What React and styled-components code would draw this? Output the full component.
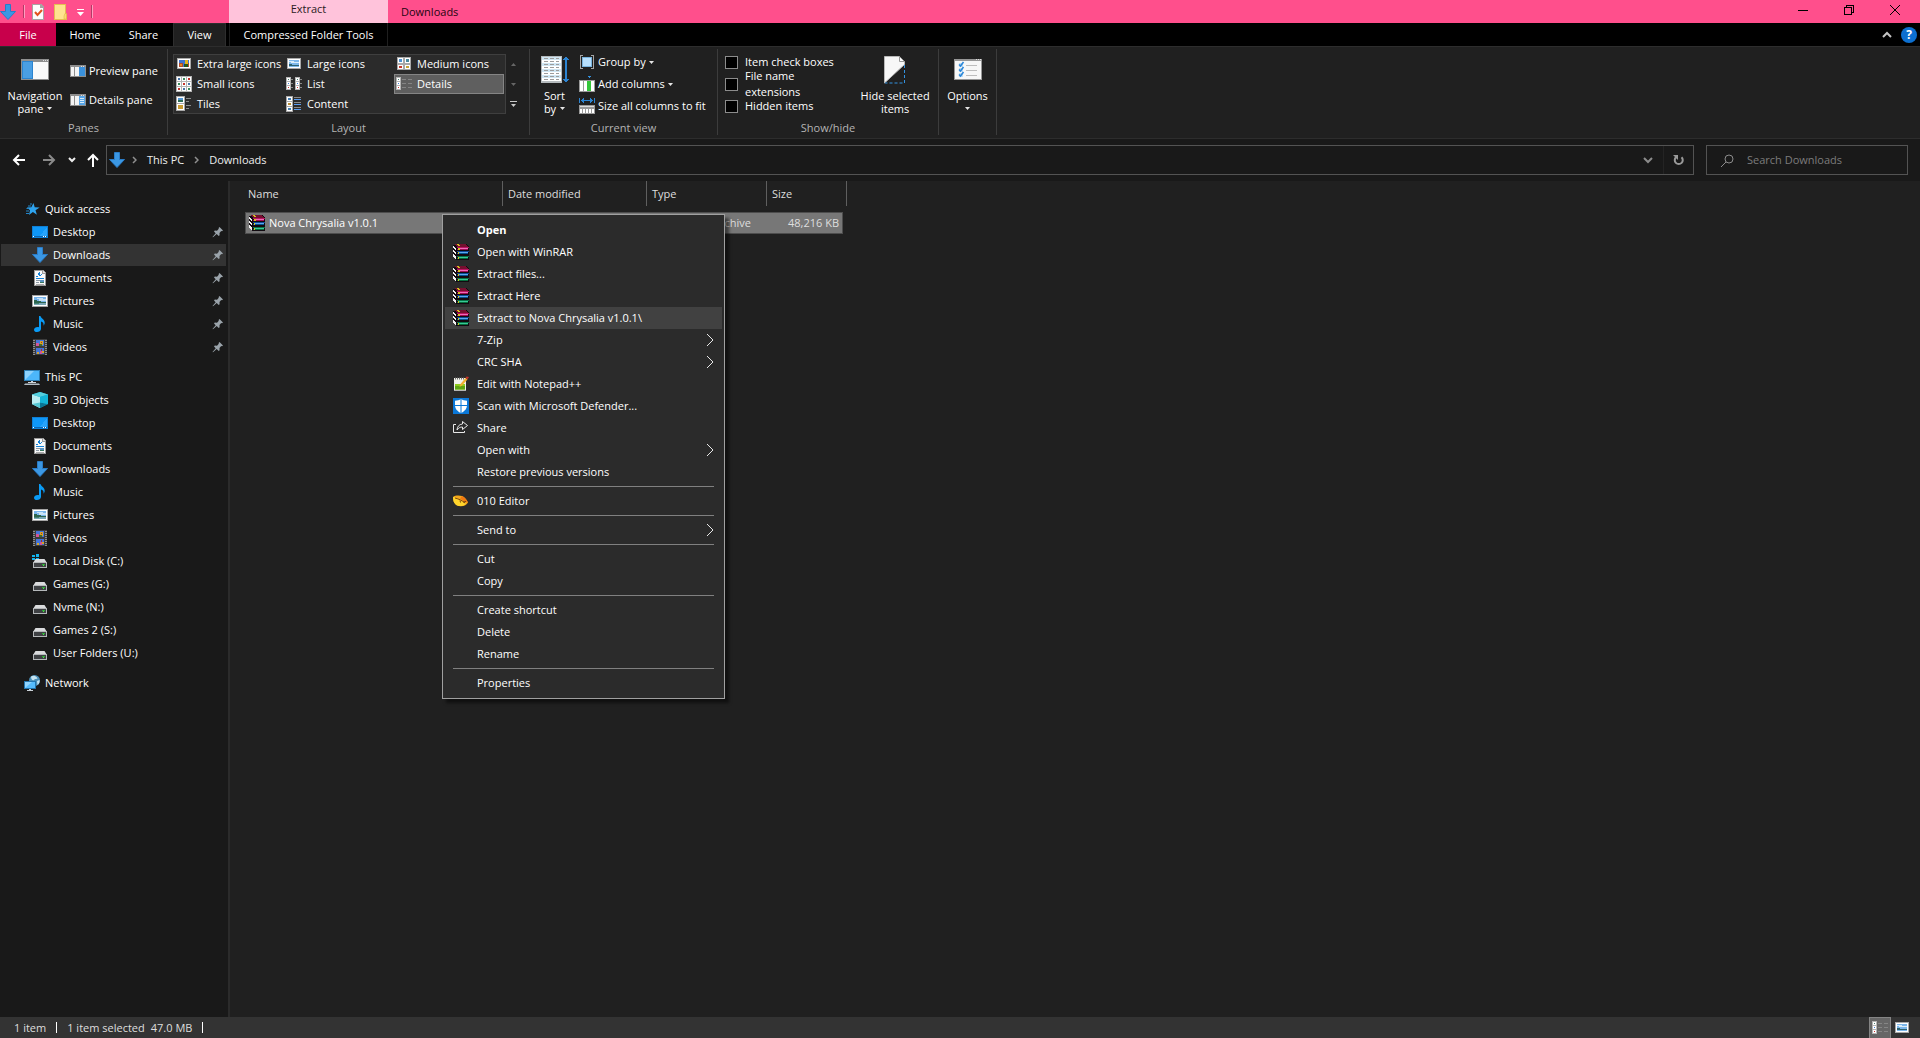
//Explorer window, details view with the file context menu opened
import React, { useState } from 'react';
import styled, { createGlobalStyle } from 'styled-components';

const GlobalStyle = createGlobalStyle`
    * {
        box-sizing: border-box;
    }
    body {
        margin: 0;
        background: #202020;
        color: #fff;
        font-family: "Open Sans", "Noto Sans", sans-serif;
        font-size: 11px;
        line-height: 16px;
    }
    button, input {
        font: inherit;
        color: inherit;
        margin: 0;
        padding: 0;
        border: none;
        background: none;
    }
    a {
        color: inherit;
        text-decoration: none;
    }
    svg {
        display: block;
        flex: none;
    }
    ul {
        list-style: none;
        margin: 0;
        padding: 0;
    }
`

/* ---------- icons ---------- */

const Svg = ({ w = 16, h = 16, crisp, children }) => (
    <svg width={w} height={h} viewBox={`0 0 ${w} ${h}`} fill="none" aria-hidden="true" shapeRendering={crisp ? 'crispEdges' : 'auto'}>
        {children}
    </svg>
);

const DownloadIcon = () => (
    <Svg>
        <path d="M5.5 .5h5v7h5L8 15.5.5 7.500h5z" fill="#3b97e3" stroke="#2a7cc7" />
    </Svg>
);

const DesktopIcon = () => (
    <Svg crisp>
        <rect y="2" width="16" height="12" fill="#0f7fd4" />
        <rect x="1" y="3" width="14" height="9" fill="#0f97f7" />
        <path d="M8 12l7-9v9z" fill="#28a4fb" />
        <path d="M1 12h14v1H1z" fill="#0a66b4" />
        <path d="M1 12h1v1H1zM11 12h1v1h-1zM13 12h1v1h-1z" fill="#fff" />
    </Svg>
);

const DocumentIcon = () => (
    <Svg crisp>
        <path d="M2 0h9l3 3v13H2z" fill="#9a9a9a" />
        <path d="M3 1h7v3h3v11H3z" fill="#fafafa" />
        <path d="M11 1l2 2h-2z" fill="#ddd" />
        <path d="M5 5h1V3h1V2h1v3h1v1M9 4h1v1H9zM4 6h2v1H4zM4 8h8v1H4z" fill="#1683d8" />
        <path d="M4 10h4v1H4zM4 12h3v1H4z" fill="#8d9aa5" />
        <path d="M8 10h4v2H8z" fill="#5a94c2" />
        <path d="M8 12h4v1H8z" fill="#39775f" />
        <path d="M4 14h8" stroke="#aaa" />
    </Svg>
);

const PictureIcon = () => (
    <Svg crisp>
        <rect y="2" width="16" height="12" fill="#a5a5a5" />
        <rect x="1" y="3" width="14" height="10" fill="#fff" />
        <rect x="2" y="4" width="12" height="8" fill="#79b5ec" />
        <path d="M5 5h6v1h3v2H7V6H5z" fill="#c8e2f7" />
        <path d="M2 7h3v1h4v1h5v1H2z" fill="#2d6650" />
        <path d="M2 10h12v2H2z" fill="#7aa7b5" />
        <path d="M2 10h5v1H2z" fill="#44806f" />
    </Svg>
);

const MusicIcon = () => (
    <Svg>
        <path d="M7 0h1.500c.2 2.300 4.500 3.500 4.200 7 0 1-.6 2-1.200 2.700.5-2.500-.8-3.700-2.500-4.200V13c-.2 1.800-2 3-4 3C3.300 16 2 15.200 2 13.700c0-1.800 2.500-3.200 5-2.500z" fill="#0a9bf5" />
    </Svg>
);

const VideoIcon = () => (
    <Svg crisp>
        <rect x="1" width="14" height="16" fill="#3c3c3c" />
        <path d="M2 1v15M14 1v15" stroke="#8b8b8b" strokeWidth="2" strokeDasharray="1 1" />
        <rect x="4" y="1" width="8" height="6" fill="#4474d8" />
        <rect x="4" y="9" width="8" height="6" fill="#4474d8" />
        <path d="M4 4h3v3H4zM8 12h2v3H8z" fill="#d2559a" />
        <path d="M8 2h3v4H8zM5 13h2v2H5zM10 12h2v2h-2z" fill="#d8a425" />
        <path d="M7 5h3v2H7z" fill="#436b27" />
        <path d="M9 3h1v1H9zM9 10h1v2H9z" fill="#b33020" />
    </Svg>
);

const StarIcon = () => (
    <Svg>
        <path d="M9.500 2l1.200 4.300 5 .1-4.200 2.800 1.400 4.500-4-2.600-3.900 3 1-4.800-3.200-2.700 4.500-.3z" fill="#2ea3ee" />
        <path d="M6 3h2M4 5h3M2.500 7.500H5M2 10h3M2 12.500h3" stroke="#2384c6" />
    </Svg>
);

const ComputerIcon = () => (
    <Svg>
        <rect x=".5" y="1.500" width="15" height="10" fill="#4cb7fb" stroke="#2d7eb4" />
        <path d="M1 11V2h9z" fill="#8dd2fd" />
        <path d="M7 12h2v1H7zM4 13h8v1H4z" fill="#cfd5da" />
        <path d="M1 14.500h14l1 1.500H0z" fill="#b1bbc4" />
    </Svg>
);

const CubeIcon = () => (
    <Svg>
        <path d="M8 0l8 2.500V12l-8 4-8-4V2.500z" fill="#1aa9cb" />
        <path d="M0 2.500L8 5v11l-8-4z" fill="#b9eef3" />
        <path d="M8 0l8 2.500L8 5 0 2.500z" fill="#54cfdd" />
        <path d="M0 12l8-1.500V16z" fill="#54c6d2" />
        <path d="M8 10.500l8 1.500-8 4z" fill="#0b7594" />
        <path d="M8 5l8-2.500V12l-8-1.500z" fill="#14b4d6" />
    </Svg>
);

const DriveIcon = ({ system }) => (
    <Svg>
        {system && <path d="M0 2h3v2H0zM4 1h3v3H4zM0 5h3v2H0zM4 5h3v3H4z" fill="#12b5ee" />}
        <path d="M3.500 6h9L15 10H1z" fill="#dadbdd" />
        <rect x="1.500" y="9.500" width="13" height="5" fill="#3f4144" stroke="#b5b8ba" />
        <rect x="11" y="11" width="1" height="2" fill="#45ea45" />
        <rect x="10" y="11" width="3" height="1" fill="#2eab35" />
    </Svg>
);

const NetworkIcon = () => (
    <Svg>
        <circle cx="10.500" cy="5.500" r="5.500" fill="#4b8fb8" />
        <path d="M7 1.500c3-2 6 0 6.500 2-1.500 1-2.500-.5-3.500 1.500-1.500 1-3-1-3-3.500zM13 6l2.500-1c.5 2-.5 4-2 5z" fill="#c4e3f0" />
        <rect x=".5" y="6.500" width="11" height="7" fill="#55bbfc" stroke="#2274ad" />
        <path d="M1 13V7h7z" fill="#91d4fd" />
        <path d="M5 14h2v1H5zM3 15h6v1H3z" fill="#cbd2d8" />
    </Svg>
);

const PinIcon = () => (
    <Svg w={12} h={12}>
        <path d="M7.500 1L11 4.500l-1 .8-.8-.2L7.500 7l.1 2.200-.9.8-2-2L1 11.200.5 11 3.700 7.200 2 5.500l.8-.9 2.200.1 1.800-1.900L6.600 2z" fill="#9aa3aa" />
    </Svg>
);

const BooksIcon = () => (
    <Svg crisp>
        <path d="M3 0h10l3 3v13H4L0 13V1z" fill="#120a10" />
        <path d="M2 0h11l2 3H4z" fill="#75102f" />
        <path d="M4 3h12v1H4z" fill="#b81562" />
        <path d="M5 4h10v1H5z" fill="#f06bb7" />
        <path d="M4 5h11v1H4z" fill="#a00c55" />
        <path d="M4 7h12v1H4z" fill="#0d4a98" />
        <path d="M5 8h10v1H5z" fill="#5ba9ea" />
        <path d="M4 9h11v1H4z" fill="#07508f" />
        <path d="M4 12h12v1H4z" fill="#087548" />
        <path d="M5 13h10v1H5z" fill="#39c897" />
        <path d="M4 14h11v1H4z" fill="#066c3c" />
        <path d="M0 2h1v1h1v1h1v2H2V5H1V4H0zM0 6h1v1h1v1h1v2H2V9H1V8H0zM0 10h1v1h1v1h1v3H2v-1H1v-1H0z" fill="#f2f2f2" />
        <path d="M4 0h2v1H4zM5 1h2v1H5zM5 4h2v2H5zM5 8h1v2H5zM5 13h1v2H5z" fill="#d6c31f" />
    </Svg>
);

const NotepadIcon = () => (
    <Svg>
        <path d="M1 2h12v12.500H1z" fill="#f1f2ea" />
        <path d="M2 8h10v5.500H2z" fill="#8fcc1d" />
        <path d="M2 10h10v3.500H2z" fill="#5ea512" />
        <path d="M2 2.500h10" stroke="#6f6f6f" strokeWidth="2" strokeDasharray="1 1" />
        <path d="M6.500 11l1-3 5-6 2 1.500-5.500 6z" fill="#f0b030" />
        <path d="M12.500 2l1-1.500L16 1l-1.500 2.500z" fill="#c2342a" />
        <path d="M1 14.500h12" stroke="#b5b5b5" />
    </Svg>
);

const DefenderIcon = () => (
    <Svg>
        <rect width="16" height="16" fill="#0b78d8" />
        <path d="M8 1c1.700 1.200 3.500 1.700 6 1.700V7c0 4-2.700 6.500-6 8-3.300-1.500-6-4-6-8V2.700C4.500 2.700 6.300 2.200 8 1z" fill="#fff" />
        <path d="M7.500 1h1v14h-1zM2 7h12v1H2z" fill="#0b78d8" />
    </Svg>
);

const ShareIcon = () => (
    <Svg>
        <path d="M3 4.500H.5v8h11V11" stroke="#e8e8e8" />
        <path d="M9.500 1.500l5 4-5 4v-2.500c-2.500 0-4 .8-5.500 3 .3-3.500 2-5.700 5.500-6z" stroke="#e8e8e8" />
    </Svg>
);

const EditorIcon = () => (
    <Svg>
        <path d="M0 4c2-1.700 6-1.800 9-1 2.500 1 4.500 3.500 6 6.500-1.500 2.500-4 4-8 3.700C2.500 12.500 0 9 0 4z" fill="#f5a81b" />
        <path d="M0 4c4 .5 9 3 12 5.500 1 1 1 2-1.500 3-3 1-6 .7-8-1C.7 9.500 0 7 0 4z" fill="#ffd52c" />
        <path d="M9 3c2.500 1 4.500 3.500 6 6.500-2-.5-5.500-2-8-4z" fill="#f07a12" />
        <path d="M2 5c4 1 7 2.500 10 5M7 7.500l.5 2M10 9l3-.5" stroke="#80420c" />
    </Svg>
);

const RibbonDoc = () => (
    <Svg w={12} crisp>
        <path d="M0 0h9l3 3v13H0z" fill="#a9a3a3" />
        <path d="M1 1h7v3h3v11H1z" fill="#fdfdfd" />
        <path d="M3 8l2.500 3L10 6" stroke="#e2541f" strokeWidth="2" shapeRendering="auto" />
    </Svg>
);

const FolderIcon = () => (
    <Svg w={13}>
        <path d="M0 0h12v9.500h1V16H0z" fill="#e5bd52" />
        <path d="M1 1h10v14H1z" fill="#ffe38f" />
        <path d="M11 9.500h1.500V15H10v-3z" fill="#fbd773" stroke="#dcae3d" strokeWidth=".5" />
    </Svg>
);

const PaneIcon = ({ kind }) => (
    <Svg crisp>
        <rect y="2" width="16" height="12" fill="#8e8e8e" />
        <path d="M11 3h1v1h-1zM13 3h1v1h-1z" fill="#ddd" />
        <path d="M1 4h3v9H1zM5 4h4v9H5z" fill="#f3f3f3" />
        <path d="M9 4h6v9H9z" fill={kind === 'details' ? '#58a6e8' : '#3a91dc'} />
        {kind === 'details' && <path d="M10 6.500h4M10 8.500h4M10 10.500h4" stroke="#d8ecfb" />}
    </Svg>
);

const NavigationIcon = () => (
    <Svg w={28} h={22} crisp>
        <rect width="28" height="21" fill="#8f8f8f" />
        <path d="M22 1h1v1h-1zM24 1h1v1h-1zM26 1h1v1h-1z" fill="#e0e0e0" />
        <rect x="1" y="3" width="26" height="17" fill="#fafafa" />
        <rect x="1" y="3" width="11" height="17" fill="#4a9fe4" />
        <path d="M1.500 2.500h10v17h-10z" stroke="#2c84cf" />
    </Svg>
);

const Thumb = ({ x, y, w, h, fill }) => (
    <>
        <rect x={x} y={y} width={w} height={h} fill="#a9a9a9" />
        <rect x={x + 1} y={y + 1} width={w - 2} height={h - 2} fill="#fff" />
        <rect x={x + 2} y={y + 2} width={w - 4} height={h - 4} fill={fill} />
    </>
);

const ExtraLargeIcon = () => (
    <Svg crisp>
        <Thumb x={1} y={2} w={14} h={11} fill="#3f73d0" />
        <path d="M3 7h4v4H3zM11 7h2v4h-2z" fill="#b04c2c" />
        <path d="M9 4h3v4H9z" fill="#e5b51e" />
        <path d="M8 8h4v3H8z" fill="#23571f" />
        <path d="M4 8h2v2H4z" fill="#e38a23" />
    </Svg>
);

const LargeIcon = () => (
    <Svg crisp>
        <Thumb x={1} y={2} w={14} h={11} fill="#7db7eb" />
        <path d="M3 5h5v1h5v1H5V6H3z" fill="#dbeefa" />
        <path d="M3 8h3v1h7v1H3z" fill="#2e6370" />
    </Svg>
);

const MediumIcon = () => (
    <Svg crisp>
        <Thumb x={1} y={1} w={7} h={7} fill="#4f93d0" />
        <Thumb x={8} y={1} w={7} h={7} fill="#4b8a9d" />
        <Thumb x={1} y={8} w={7} h={6} fill="#c93728" />
        <Thumb x={8} y={8} w={7} h={6} fill="#c8a436" />
    </Svg>
);

const SmallIcon = () => (
    <Svg crisp>
        <rect width="16" height="16" fill="#b5b5b5" />
        {[0, 1, 2].map((r) => [0, 1, 2].map((c) => (
            <g key={r + '-' + c}>
                <rect x={1 + c * 5} y={1 + r * 5} width="4" height="4" fill="#fff" />
                <rect x={2 + c * 5} y={2 + r * 5} width="2" height="2" fill={['#4673a8', '#3a8a5b', '#c4332b'][(r + c) % 3]} />
            </g>
        )))}
    </Svg>
);

const ListStrip = ({ x }) => (
    <>
        <rect x={x} y="1" width="5" height="13" fill="#b5b5b5" />
        {['#4d8272', '#3f7fdc', '#d22f2f'].map((c, i) => (
            <g key={c}>
                <rect x={x + 1} y={2 + i * 4} width="3" height="3" fill="#fff" />
                <rect x={x + 2} y={3 + i * 4} width="1" height="1" fill={c} />
            </g>
        ))}
    </>
);

const ListIcon = () => (
    <Svg crisp>
        <ListStrip x={0} />
        <ListStrip x={9} />
        <path d="M5 3.500h2M5 7.500h2M5 11.500h2M14 3.500h2M14 7.500h2M14 11.500h2" stroke="#8a8a8a" />
    </Svg>
);

const DetailsIcon = () => (
    <Svg crisp>
        <ListStrip x={0} />
        <path d="M6 3.500h4M6 7.500h4M6 11.500h4M12 3.500h4M12 7.500h4M12 11.500h4" stroke="#858585" />
    </Svg>
);

const TilesIcon = () => (
    <Svg crisp>
        <Thumb x={0} y={0} w={9} h={8} fill="#5597d3" />
        <Thumb x={0} y={7} w={9} h={8} fill="#c99b32" />
        <path d="M2 4h5v2H2z" fill="#2f6d56" />
        <path d="M10 2.500h5M10 5.500h3M10 9.500h5M10 12.500h3" stroke="#8a8a8a" />
    </Svg>
);

const ContentIcon = () => (
    <Svg crisp>
        <Thumb x={0} y={0} w={7} h={6} fill="#477fb3" />
        <Thumb x={0} y={5} w={7} h={6} fill="#b98d35" />
        <Thumb x={0} y={10} w={7} h={6} fill="#467fae" />
        <path d="M8 1.500h7M8 6.500h7M8 11.500h7" stroke="#8a8a8a" />
        <path d="M8 3.500h7M8 8.500h7M8 13.500h7" stroke="#5b9df0" />
    </Svg>
);

const SortIcon = () => (
    <Svg w={28} h={28} crisp>
        <rect width="21" height="27" fill="#b5babd" />
        {[0, 1, 2, 3, 4, 5, 6, 7].map((i) => (
            <g key={i}>
                <rect x="1" y={1 + i * 3} width="19" height="3" fill={i % 2 ? '#fff' : '#cfe6f3'} />
                <path d={`M3 ${2.5 + i * 3}h4M9 ${2.5 + i * 3}h4M15 ${2.5 + i * 3}h3`} stroke="#9c9c9c" />
            </g>
        ))}
        <path d="M25 2v23" stroke="#2c84d2" strokeWidth="2" />
        <path d="M22 4l3-4 3 4zM22 23l3 4 3-4z" fill="#2c84d2" />
    </Svg>
);

const GroupIcon = () => (
    <Svg crisp>
        <path d="M4 1.500H1.500v13H4M12 1.500h2.500v13H12" stroke="#a5a5a5" />
        <path d="M3.500 3.500h9v9h-9z" fill="#b8dffc" stroke="#78b2dd" />
    </Svg>
);

const AddColumnsIcon = () => (
    <Svg crisp>
        <path d="M8 0h4l-2 2z" fill="#3392e0" />
        <rect y="4" width="16" height="12" fill="#9a9a9a" />
        <path d="M1 5h3v10H1zM5 5h3v10H5zM12 5h3v10h-3z" fill="#fff" />
        <path d="M8 5h4v10H8z" fill="#34c63a" />
    </Svg>
);

const SizeColumnsIcon = () => (
    <Svg crisp>
        <path d="M.5 0v5M15.500 0v5M3 2.500h10" stroke="#2c84d2" />
        <path d="M2 2.500l3-2.500v5zM14 2.500L11 0v5z" fill="#2c84d2" />
        <rect y="7" width="16" height="9" fill="#9a9a9a" />
        <path d="M1 8h14v1H1z" fill="#dcdcdc" />
        <path d="M1 11h2v4H1zM4 11h2v4H4zM7 11h2v4H7zM10 11h2v4h-2zM13 11h2v4h-2z" fill="#fff" />
    </Svg>
);

const HideIcon = () => (
    <Svg w={22} h={28}>
        <path d="M.5 27V.5h15l5 5v3z" fill="#f7f7f7" stroke="#b9b9b9" />
        <path d="M15.500.5v5h5z" fill="#fff" stroke="#999" />
        <path d="M20.500 9v18H1" stroke="#3392e0" strokeDasharray="3 2" />
    </Svg>
);

const OptionsIcon = () => (
    <Svg w={28} h={22}>
        <rect width="28" height="21" fill="#979797" />
        <rect x="1" y="2" width="26" height="18" fill="#f7f7f7" />
        <path d="M22 .500h1M24 .500h1M26 .500h1" stroke="#e0e0e0" />
        {[0, 1, 2].map((i) => (
            <g key={i}>
                <rect x="5" y={4 + i * 5} width="4" height="4" fill="#c2dff5" />
                <path d={`M5 ${5.5 + i * 5}l1.500 1.500 3-4`} stroke="#2a86d8" strokeWidth="1.500" />
                <path d={`M12 ${6.5 + i * 5}h11`} stroke="#bdbdbd" />
            </g>
        ))}
    </Svg>
);

const Caret = ({ fill = '#e6e6e6' }) => (
    <Svg w={5} h={3}>
        <path d="M0 0h5L2.500 3z" fill={fill} />
    </Svg>
);

const ArrowIcon = ({ color = '#fff', d }) => (
    <Svg w={14} h={14}>
        <path d={d} stroke={color} strokeWidth="2" />
    </Svg>
);

const BreadChevron = () => (
    <Svg w={5} h={8}>
        <path d="M1 1l3 3-3 3" stroke="#8f8f8f" strokeWidth="1.500" />
    </Svg>
);

const MenuChevron = () => (
    <Svg w={8} h={14}>
        <path d="M1 1l6 6-6 6" stroke="#e8e8e8" />
    </Svg>
);

/* ---------- layout ---------- */

const Window = styled.div`
    display: flex;
    flex-direction: column;
    min-height: 100vh;
`

const TitleBar = styled.header`
    display: flex;
    height: 23px;
    background: #ff4f8c;
    color: #1d0510;
`

const QuickBar = styled.div`
    display: flex;
    align-items: center;
    gap: 10px;
    width: 229px;
    button {
        display: flex;
    }
`

const QuickDivider = styled.span`
    width: 2px;
    height: 13px;
    border-left: 1px solid #b43a66;
    border-right: 1px solid #ff9dbf;
    margin: 0 -3px;
`

const ContextTitle = styled.div`
    width: 159px;
    padding-top: 1px;
    background: #ffc3db;
    text-align: center;
    color: #2b1b22;
`

const WindowTitle = styled.h1`
    flex: 1;
    margin: 0;
    padding: 4px 0 0 13px;
    font-size: 11px;
    font-weight: 400;
`

const WindowControls = styled.div`
    display: flex;
    padding-right: 2px;
    button {
        display: flex;
        justify-content: center;
        padding-top: 5px;
        width: 46px;
    }
`

const TabRow = styled.nav`
    display: flex;
    height: 23px;
    background: #000;
`

const Tab = styled.button`
    width: ${props => props.$width}px;
    background: ${props => props.$file ? '#c8004b' : props.$active ? '#202020' : 'transparent'};
    border: solid #2e2e2e;
    border-width: ${props => props.$active ? '1px 1px 0' : '0'};
`

const ContextTab = styled(Tab)`
    margin-left: 3px;
    border: solid #1f1f1f;
    border-width: 0 1px;
`

const TabRowEnd = styled.div`
    display: flex;
    align-items: center;
    gap: 9px;
    margin-left: auto;
    padding-right: 3px;
`

const Help = styled.button`
    width: 16px;
    height: 16px;
    border-radius: 8px;
    background: #0c6fd0;
    font-size: 12px;
    font-weight: 700;
    line-height: 16px;
`

const Ribbon = styled.div`
    display: flex;
    height: 93px;
    padding-top: 2px;
    background: #202020;
    border: solid #2d2d2d;
    border-width: 1px 0;
`

const Group = styled.section`
    display: flex;
    flex-direction: column;
    width: ${props => props.$width}px;
    height: 86px;
    border-right: 1px solid #3c3c3c;
`

const GroupBody = styled.div`
    display: flex;
    flex: 1;
    padding-left: ${props => props.$left || 0}px;
`

const GroupLabel = styled.h2`
    margin: 0;
    font-size: 11px;
    font-weight: 400;
    line-height: 14px;
    text-align: center;
    color: #b4b4b4;
`

const BigButton = styled.button`
    display: flex;
    flex-direction: column;
    align-items: center;
    width: ${props => props.$width}px;
    padding-top: 7px;
    line-height: 13px;
`

const BigIcon = styled.span`
    display: flex;
    align-items: center;
    height: 28px;
    margin-bottom: 5px;
`

const Inline = styled.span`
    display: flex;
    align-items: center;
    gap: 4px;
    min-height: 13px;
`

const SmallStack = styled.div`
    display: flex;
    flex-direction: column;
    padding: ${props => props.$wide ? '7px 0 0 0' : '2px 0 0 0'};
    button {
        display: flex;
        align-items: center;
        gap: 3px;
        height: ${props => props.$wide ? 29 : 22}px;
    }
`

const CheckLabel = styled.label`
    display: flex;
    align-items: center;
    gap: 7px;
    height: 22px;
    input {
        appearance: none;
        width: 13px;
        height: 13px;
        background: #000;
        border: 1px solid #8c8c8c;
    }
    input:checked {
        background: #8c8c8c;
    }
`

const Gallery = styled.div`
    display: grid;
    grid-template-columns: repeat(3, 110px);
    grid-auto-rows: 20px;
    width: 333px;
    height: 60px;
    margin-top: 5px;
    padding-left: 1px;
    background: #2b2b2b;
    box-shadow: inset 0 0 0 1px #3f3f3f;
`

const GalleryItem = styled.button`
    display: flex;
    align-items: center;
    gap: 5px;
    padding-left: 2px;
    white-space: nowrap;
    background: ${props => props.$active ? '#5f5f5f' : 'transparent'};
    box-shadow: ${props => props.$active ? 'inset 0 0 0 1px #858585' : 'none'};
`

const GalleryScroll = styled.div`
    display: flex;
    flex-direction: column;
    margin-top: 5px;
    button {
        display: flex;
        align-items: center;
        justify-content: center;
        width: 14px;
        height: 20px;
    }
`

const NavBar = styled.div`
    display: flex;
    align-items: center;
    height: 42px;
    padding: 0 12px;
    background: #191919;
`

const NavButtons = styled.div`
    display: flex;
    align-items: center;
    width: 94px;
    button {
        display: flex;
    }
    button:nth-child(2) {
        margin-left: 16px;
    }
    button:nth-child(3) {
        margin-left: 12px;
    }
    button:nth-child(4) {
        margin-left: 10px;
    }
`

const AddressBar = styled.div`
    display: flex;
    align-items: center;
    flex: 1;
    height: 30px;
    padding-left: 2px;
    border: 1px solid #535353;
    button {
        display: flex;
        align-items: center;
        justify-content: center;
        width: 30px;
        height: 28px;
    }
    button + button {
        border-left: 1px solid #242424;
    }
`

const Crumbs = styled.div`
    display: flex;
    align-items: center;
    flex: 1;
    gap: 10px;
    padding-left: 7px;
    color: #eee;
`

const SearchBox = styled.label`
    display: flex;
    align-items: center;
    gap: 13px;
    width: 202px;
    height: 30px;
    margin-left: 12px;
    padding-left: 14px;
    border: 1px solid #535353;
    input {
        flex: 1;
        min-width: 0;
        outline: none;
    }
    input::placeholder {
        color: #7c7c7c;
        opacity: 1;
    }
`

const Body = styled.div`
    display: flex;
    flex: 1;
`

const Sidebar = styled.nav`
    width: 230px;
    padding: 16px 2px 0 1px;
    background: #191919;
    border-right: 2px solid #2b2b2b;
    ul + ul {
        margin-top: 8px;
    }
`

const SideLink = styled.a`
    display: flex;
    align-items: center;
    gap: 5px;
    height: 22px;
    margin: 1px 0;
    padding: 0 2px 0 ${props => props.$root ? 23 : 31}px;
    background: ${props => props.$active ? '#333' : 'transparent'};
    > svg:last-child:not(:first-child) {
        margin-left: auto;
    }
`

const Content = styled.main`
    position: relative;
    flex: 1;
    padding-left: 15px;
    background: #202020;
`

const FileTable = styled.table`
    table-layout: fixed;
    width: 602px;
    border-spacing: 0;
    th {
        height: 25px;
        padding: 0 0 0 5px;
        font-weight: 400;
        text-align: left;
        color: #dedede;
        border-right: 1px solid #5f5f5f;
    }
    th:first-child {
        padding-left: 3px;
    }
    tbody::before {
        content: '';
        display: block;
        height: 6px;
    }
`

const FileCell = styled.td`
    height: 22px;
    padding: 0 3px 0 5px;
    background: #777;
    border: solid #4d4d4d;
    border-width: 1px 0;
    text-align: ${props => props.$right ? 'right' : 'left'};
    white-space: nowrap;
    color: ${props => props.$name ? '#fff' : '#dedede'};
    &:first-child {
        padding-left: 3px;
        border-left-width: 1px;
    }
    &:nth-child(4) {
        border-right-width: 1px;
    }
`

const FileName = styled.span`
    display: flex;
    align-items: center;
    gap: 4px;
`

const ContextMenu = styled.ul`
    position: absolute;
    top: 33px;
    left: 212px;
    width: 283px;
    padding: 4px 2px;
    background: #2b2b2b;
    border: 1px solid #a0a0a0;
    box-shadow: 4px 4px 3px rgba(0, 0, 0, 0.5);
`

const MenuItem = styled.button`
    display: grid;
    grid-template-columns: 16px 1fr 8px;
    align-items: center;
    column-gap: 8px;
    width: 100%;
    height: 22px;
    padding: 0 8px;
    text-align: left;
    font-weight: ${props => props.$bold ? 700 : 400};
    background: ${props => props.$active ? '#414141' : 'transparent'};
`

const MenuLine = styled.li`
    height: 1px;
    margin: 3px 8px;
    background: #808080;
`

const StatusBar = styled.footer`
    display: flex;
    align-items: center;
    height: 21px;
    padding-left: 14px;
    background: #333;
    color: #dedede;
`

const StatusDivider = styled.span`
    width: 1px;
    height: 11px;
    margin: 0 10px;
    background: #fff;
`

const StatusSize = styled.span`
    margin-left: 6px;
`

const ViewSwitch = styled.div`
    display: flex;
    margin-left: auto;
    padding-right: 7px;
    button {
        display: flex;
        align-items: center;
        justify-content: center;
        width: 22px;
        height: 21px;
        background: transparent;
    }
    button:first-child {
        background: #666;
        border: 1px solid #858585;
        border-bottom: none;
    }
`

/* ---------- data ---------- */

const layouts = [
    { name: 'Extra large icons', Icon: ExtraLargeIcon },
    { name: 'Large icons', Icon: LargeIcon },
    { name: 'Medium icons', Icon: MediumIcon },
    { name: 'Small icons', Icon: SmallIcon },
    { name: 'List', Icon: ListIcon },
    { name: 'Details', Icon: DetailsIcon },
    { name: 'Tiles', Icon: TilesIcon },
    { name: 'Content', Icon: ContentIcon },
];

const sideGroups = [
    [
        { name: 'Quick access', Icon: StarIcon, root: true },
        { name: 'Desktop', Icon: DesktopIcon, pin: true },
        { name: 'Downloads', Icon: DownloadIcon, pin: true, active: true },
        { name: 'Documents', Icon: DocumentIcon, pin: true },
        { name: 'Pictures', Icon: PictureIcon, pin: true },
        { name: 'Music', Icon: MusicIcon, pin: true },
        { name: 'Videos', Icon: VideoIcon, pin: true },
    ],
    [
        { name: 'This PC', Icon: ComputerIcon, root: true },
        { name: '3D Objects', Icon: CubeIcon },
        { name: 'Desktop', Icon: DesktopIcon },
        { name: 'Documents', Icon: DocumentIcon },
        { name: 'Downloads', Icon: DownloadIcon },
        { name: 'Music', Icon: MusicIcon },
        { name: 'Pictures', Icon: PictureIcon },
        { name: 'Videos', Icon: VideoIcon },
        { name: 'Local Disk (C:)', Icon: () => <DriveIcon system /> },
        { name: 'Games (G:)', Icon: DriveIcon },
        { name: 'Nvme (N:)', Icon: DriveIcon },
        { name: 'Games 2 (S:)', Icon: DriveIcon },
        { name: 'User Folders (U:)', Icon: DriveIcon },
    ],
    [
        { name: 'Network', Icon: NetworkIcon, root: true },
    ],
];

//null = separator line
const menu = [
    { name: 'Open', bold: true },
    { name: 'Open with WinRAR', Icon: BooksIcon },
    { name: 'Extract files...', Icon: BooksIcon },
    { name: 'Extract Here', Icon: BooksIcon },
    { name: 'Extract to Nova Chrysalia v1.0.1\\', Icon: BooksIcon, active: true },
    { name: '7-Zip', sub: true },
    { name: 'CRC SHA', sub: true },
    { name: 'Edit with Notepad++', Icon: NotepadIcon },
    { name: 'Scan with Microsoft Defender...', Icon: DefenderIcon },
    { name: 'Share', Icon: ShareIcon },
    { name: 'Open with', sub: true },
    { name: 'Restore previous versions' },
    null,
    { name: '010 Editor', Icon: EditorIcon },
    null,
    { name: 'Send to', sub: true },
    null,
    { name: 'Cut' },
    { name: 'Copy' },
    null,
    { name: 'Create shortcut' },
    { name: 'Delete' },
    { name: 'Rename' },
    null,
    { name: 'Properties' },
];

/* ---------- parts ---------- */

const Title = () => (
    <TitleBar>
        <QuickBar>
            <DownloadIcon />
            <QuickDivider />
            <button aria-label="Properties"><RibbonDoc /></button>
            <button aria-label="New folder"><FolderIcon /></button>
            <button aria-label="Customize toolbar">
                <Svg w={7} h={8}>
                    <path d="M0 1.500h7" stroke="#fff" />
                    <path d="M0 4h7L3.500 8z" fill="#fff" />
                </Svg>
            </button>
            <QuickDivider />
        </QuickBar>
        <ContextTitle>Extract</ContextTitle>
        <WindowTitle>Downloads</WindowTitle>
        <WindowControls>
            <button aria-label="Minimize">
                <Svg w={10} h={10} crisp><path d="M0 5.500h10" stroke="#000" /></Svg>
            </button>
            <button aria-label="Restore">
                <Svg w={10} h={10} crisp><path d="M.5 2.500h7v7h-7zM2.500 2V.5h7v7H8" stroke="#000" /></Svg>
            </button>
            <button aria-label="Close">
                <Svg w={10} h={10}><path d="M0 0l10 10M10 0L0 10" stroke="#000" /></Svg>
            </button>
        </WindowControls>
    </TitleBar>
);

const Tabs = () => (
    <TabRow>
        <Tab $width={56} $file>File</Tab>
        <Tab $width={58}>Home</Tab>
        <Tab $width={59}>Share</Tab>
        <Tab $width={53} $active>View</Tab>
        <ContextTab $width={159}>Compressed Folder Tools</ContextTab>
        <TabRowEnd>
            <button aria-label="Minimize the ribbon">
                <Svg w={10} h={7}><path d="M1 6l4-4 4 4" stroke="#c4c4c4" strokeWidth="2" /></Svg>
            </button>
            <Help>?</Help>
        </TabRowEnd>
    </TabRow>
);

const RibbonBar = () => {
    const [layout, setLayout] = useState('Details');
    return (
        <Ribbon>
            <Group $width={168}>
                <GroupBody>
                    <BigButton $width={70}>
                        <BigIcon><NavigationIcon /></BigIcon>
                        <Inline>Navigation</Inline>
                        <Inline>pane <Caret /></Inline>
                    </BigButton>
                    <SmallStack $wide>
                        <button><PaneIcon />Preview pane</button>
                        <button><PaneIcon kind="details" />Details pane</button>
                    </SmallStack>
                </GroupBody>
                <GroupLabel>Panes</GroupLabel>
            </Group>
            <Group $width={362}>
                <GroupBody $left={5}>
                    <Gallery>
                        {layouts.map(({ name, Icon }) => (
                            <GalleryItem key={name} $active={name === layout} onClick={() => setLayout(name)}>
                                <Icon />{name}
                            </GalleryItem>
                        ))}
                    </Gallery>
                    <GalleryScroll>
                        <button aria-label="Row up"><Svg w={5} h={3}><path d="M0 3h5L2.500 0z" fill="#666" /></Svg></button>
                        <button aria-label="Row down"><Caret fill="#666" /></button>
                        <button aria-label="More layouts">
                            <Svg w={7} h={7}>
                                <path d="M0 .5h7" stroke="#c8c8c8" />
                                <path d="M1 3h5L3.500 6z" fill="#c8c8c8" />
                            </Svg>
                        </button>
                    </GalleryScroll>
                </GroupBody>
                <GroupLabel>Layout</GroupLabel>
            </Group>
            <Group $width={188}>
                <GroupBody>
                    <BigButton $width={49}>
                        <BigIcon><SortIcon /></BigIcon>
                        <Inline>Sort</Inline>
                        <Inline>by <Caret /></Inline>
                    </BigButton>
                    <SmallStack>
                        <button><GroupIcon />Group by <Caret /></button>
                        <button><AddColumnsIcon />Add columns <Caret /></button>
                        <button><SizeColumnsIcon />Size all columns to fit</button>
                    </SmallStack>
                </GroupBody>
                <GroupLabel>Current view</GroupLabel>
            </Group>
            <Group $width={221}>
                <GroupBody $left={7}>
                    <SmallStack>
                        <CheckLabel><input type="checkbox" />Item check boxes</CheckLabel>
                        <CheckLabel><input type="checkbox" />File name extensions</CheckLabel>
                        <CheckLabel><input type="checkbox" />Hidden items</CheckLabel>
                    </SmallStack>
                    <BigButton $width={86}>
                        <BigIcon><HideIcon /></BigIcon>
                        <Inline>Hide selected</Inline>
                        <Inline>items</Inline>
                    </BigButton>
                </GroupBody>
                <GroupLabel>Show/hide</GroupLabel>
            </Group>
            <Group $width={58}>
                <GroupBody>
                    <BigButton $width={57}>
                        <BigIcon><OptionsIcon /></BigIcon>
                        <Inline>Options</Inline>
                        <Inline><Caret /></Inline>
                    </BigButton>
                </GroupBody>
            </Group>
        </Ribbon>
    );
};

const Navigation = () => (
    <NavBar>
        <NavButtons>
            <button aria-label="Back"><ArrowIcon d="M13 7H2M7 2L2 7l5 5" /></button>
            <button aria-label="Forward"><ArrowIcon color="#8a8a8a" d="M1 7h11M7 2l5 5-5 5" /></button>
            <button aria-label="Recent locations">
                <Svg w={8} h={6}><path d="M1 1l3 3 3-3" stroke="#eee" strokeWidth="2" /></Svg>
            </button>
            <button aria-label="Up"><ArrowIcon d="M7 14V2M2 7l5-5 5 5" /></button>
        </NavButtons>
        <AddressBar>
            <DownloadIcon />
            <Crumbs>
                <BreadChevron />
                <a href="#this-pc">This PC</a>
                <BreadChevron />
                <a href="#downloads">Downloads</a>
            </Crumbs>
            <button aria-label="Previous locations">
                <Svg w={10} h={7}><path d="M1 1l4 4 4-4" stroke="#8c8c8c" strokeWidth="2" /></Svg>
            </button>
            <button aria-label="Refresh">
                <Svg w={11} h={12}>
                    <path d="M8.500 3.200A4 4 0 1 1 3 3.200" stroke="#9a9a9a" strokeWidth="2" />
                    <path d="M0 1h5v5z" fill="#9a9a9a" />
                </Svg>
            </button>
        </AddressBar>
        <SearchBox>
            <Svg w={13} h={13}>
                <circle cx="8" cy="5" r="4" stroke="#8c8c8c" />
                <path d="M5 8l-5 5" stroke="#8c8c8c" />
            </Svg>
            <input type="text" aria-label="Search Downloads" placeholder="Search Downloads" />
        </SearchBox>
    </NavBar>
);

const SideTree = () => (
    <Sidebar>
        {sideGroups.map((group) => (
            <ul key={group[0].name}>
                {group.map(({ name, Icon, root, pin, active }) => (
                    <li key={name}>
                        <SideLink href="#" $root={root} $active={active}>
                            <Icon />
                            {name}
                            {pin && <PinIcon />}
                        </SideLink>
                    </li>
                ))}
            </ul>
        ))}
    </Sidebar>
);

const Files = () => (
    <FileTable>
        <colgroup>
            <col width="258" />
            <col width="144" />
            <col width="120" />
            <col width="76" />
            <col width="4" />
        </colgroup>
        <thead>
            <tr>
                <th>Name</th>
                <th>Date modified</th>
                <th>Type</th>
                <th colSpan={2}>Size</th>
            </tr>
        </thead>
        <tbody>
            <tr>
                <FileCell $name><FileName><BooksIcon />Nova Chrysalia v1.0.1</FileName></FileCell>
                <FileCell />
                <FileCell>WinRAR ZIP archive</FileCell>
                <FileCell $right>48,216 KB</FileCell>
            </tr>
        </tbody>
    </FileTable>
);

const FileMenu = () => (
    <ContextMenu>
        {menu.map((item, i) => item ? (
            <li key={i}>
                <MenuItem $bold={item.bold} $active={item.active}>
                    {item.Icon ? <item.Icon /> : <span />}
                    {item.name}
                    {item.sub && <MenuChevron />}
                </MenuItem>
            </li>
        ) : <MenuLine key={i} />)}
    </ContextMenu>
);

const Status = () => (
    <StatusBar>
        <span>1 item</span>
        <StatusDivider />
        <span>1 item selected</span>
        <StatusSize>47.0 MB</StatusSize>
        <StatusDivider />
        <ViewSwitch>
            <button aria-label="Details view"><DetailsIcon /></button>
            <button aria-label="Large thumbnails"><LargeIcon /></button>
        </ViewSwitch>
    </StatusBar>
);

const App = () => (
    <>
        <GlobalStyle />
        <Window>
            <Title />
            <Tabs />
            <RibbonBar />
            <Navigation />
            <Body>
                <SideTree />
                <Content>
                    <Files />
                    <FileMenu />
                </Content>
            </Body>
            <Status />
        </Window>
    </>
);

export default App;
